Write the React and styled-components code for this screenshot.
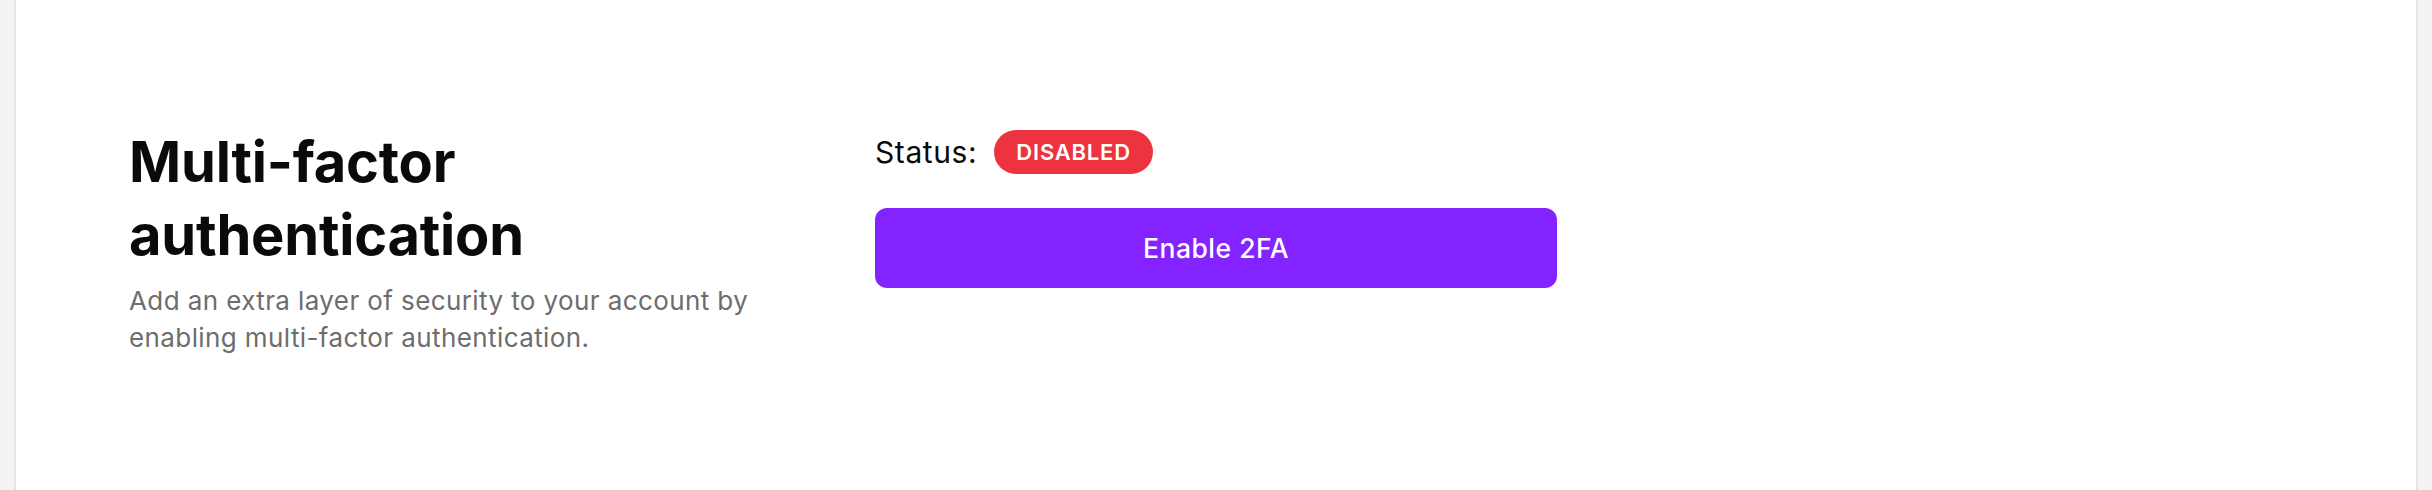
import React from "react";
import styled, { createGlobalStyle } from "styled-components";

const GlobalStyle = createGlobalStyle`
  html, body {
    margin: 0;
    padding: 0;
    background: #f3f3f3;
  }
  body {
    font-family: Inter, "Noto Sans", sans-serif;
    -webkit-font-smoothing: antialiased;
  }
`;

const Page = styled.div`
  padding: 0 14px;
  min-height: 490px;
  box-sizing: border-box;
  display: flex;
`;

const Card = styled.section`
  flex: 1;
  background: #fff;
  border-left: 2px solid #e6e6e6;
  border-right: 2px solid #e6e6e6;
  padding: 126px 113px 0;
  display: grid;
  grid-template-columns: 650px 682px;
  column-gap: 96px;
  align-items: start;
`;

const Info = styled.div`
  display: flex;
  flex-direction: column;
  gap: 10px;
`;

const Title = styled.h2`
  margin: 0;
  font-size: 56px;
  line-height: 73px;
  font-weight: 700;
  letter-spacing: -0.2px;
  color: #0a0a0a;
`;

const Description = styled.p`
  margin: 0;
  font-size: 26px;
  line-height: 37px;
  letter-spacing: 0.4px;
  color: #6d6d6d;
`;

const Controls = styled.div`
  display: flex;
  flex-direction: column;
  gap: 34px;
  padding-top: 4px;
`;

const StatusRow = styled.div`
  display: flex;
  align-items: center;
  gap: 17px;
`;

const StatusLabel = styled.span`
  font-size: 30px;
  letter-spacing: 0.6px;
  color: #0a0a0a;
`;

const Badge = styled.span`
  display: inline-flex;
  align-items: center;
  justify-content: center;
  height: 44px;
  padding: 0 22px;
  border-radius: 22px;
  background: ${(p) => (p.$on ? "#1fa85a" : "#ee3340")};
  color: #fff;
  font-size: 22px;
  font-weight: 600;
  letter-spacing: 0.8px;
`;

const PrimaryButton = styled.button`
  height: 80px;
  width: 100%;
  border: none;
  border-radius: 12px;
  background: #8323ff;
  color: #fff;
  font-family: inherit;
  font-size: 26.5px;
  font-weight: 500;
  letter-spacing: 0.5px;
  cursor: pointer;

  &:hover {
    background: #7316ee;
  }
`;

const App = () => {
  const enabled = false;

  return (
    <>
      <GlobalStyle />
      <Page>
        <Card>
          <Info>
            <Title>Multi-factor authentication</Title>
            <Description>
              Add an extra layer of security to your account by enabling
              multi-factor authentication.
            </Description>
          </Info>
          <Controls>
            <StatusRow>
              <StatusLabel>Status:</StatusLabel>
              <Badge $on={enabled}>{enabled ? "ENABLED" : "DISABLED"}</Badge>
            </StatusRow>
            <PrimaryButton>Enable 2FA</PrimaryButton>
          </Controls>
        </Card>
      </Page>
    </>
  );
};

export default App;
